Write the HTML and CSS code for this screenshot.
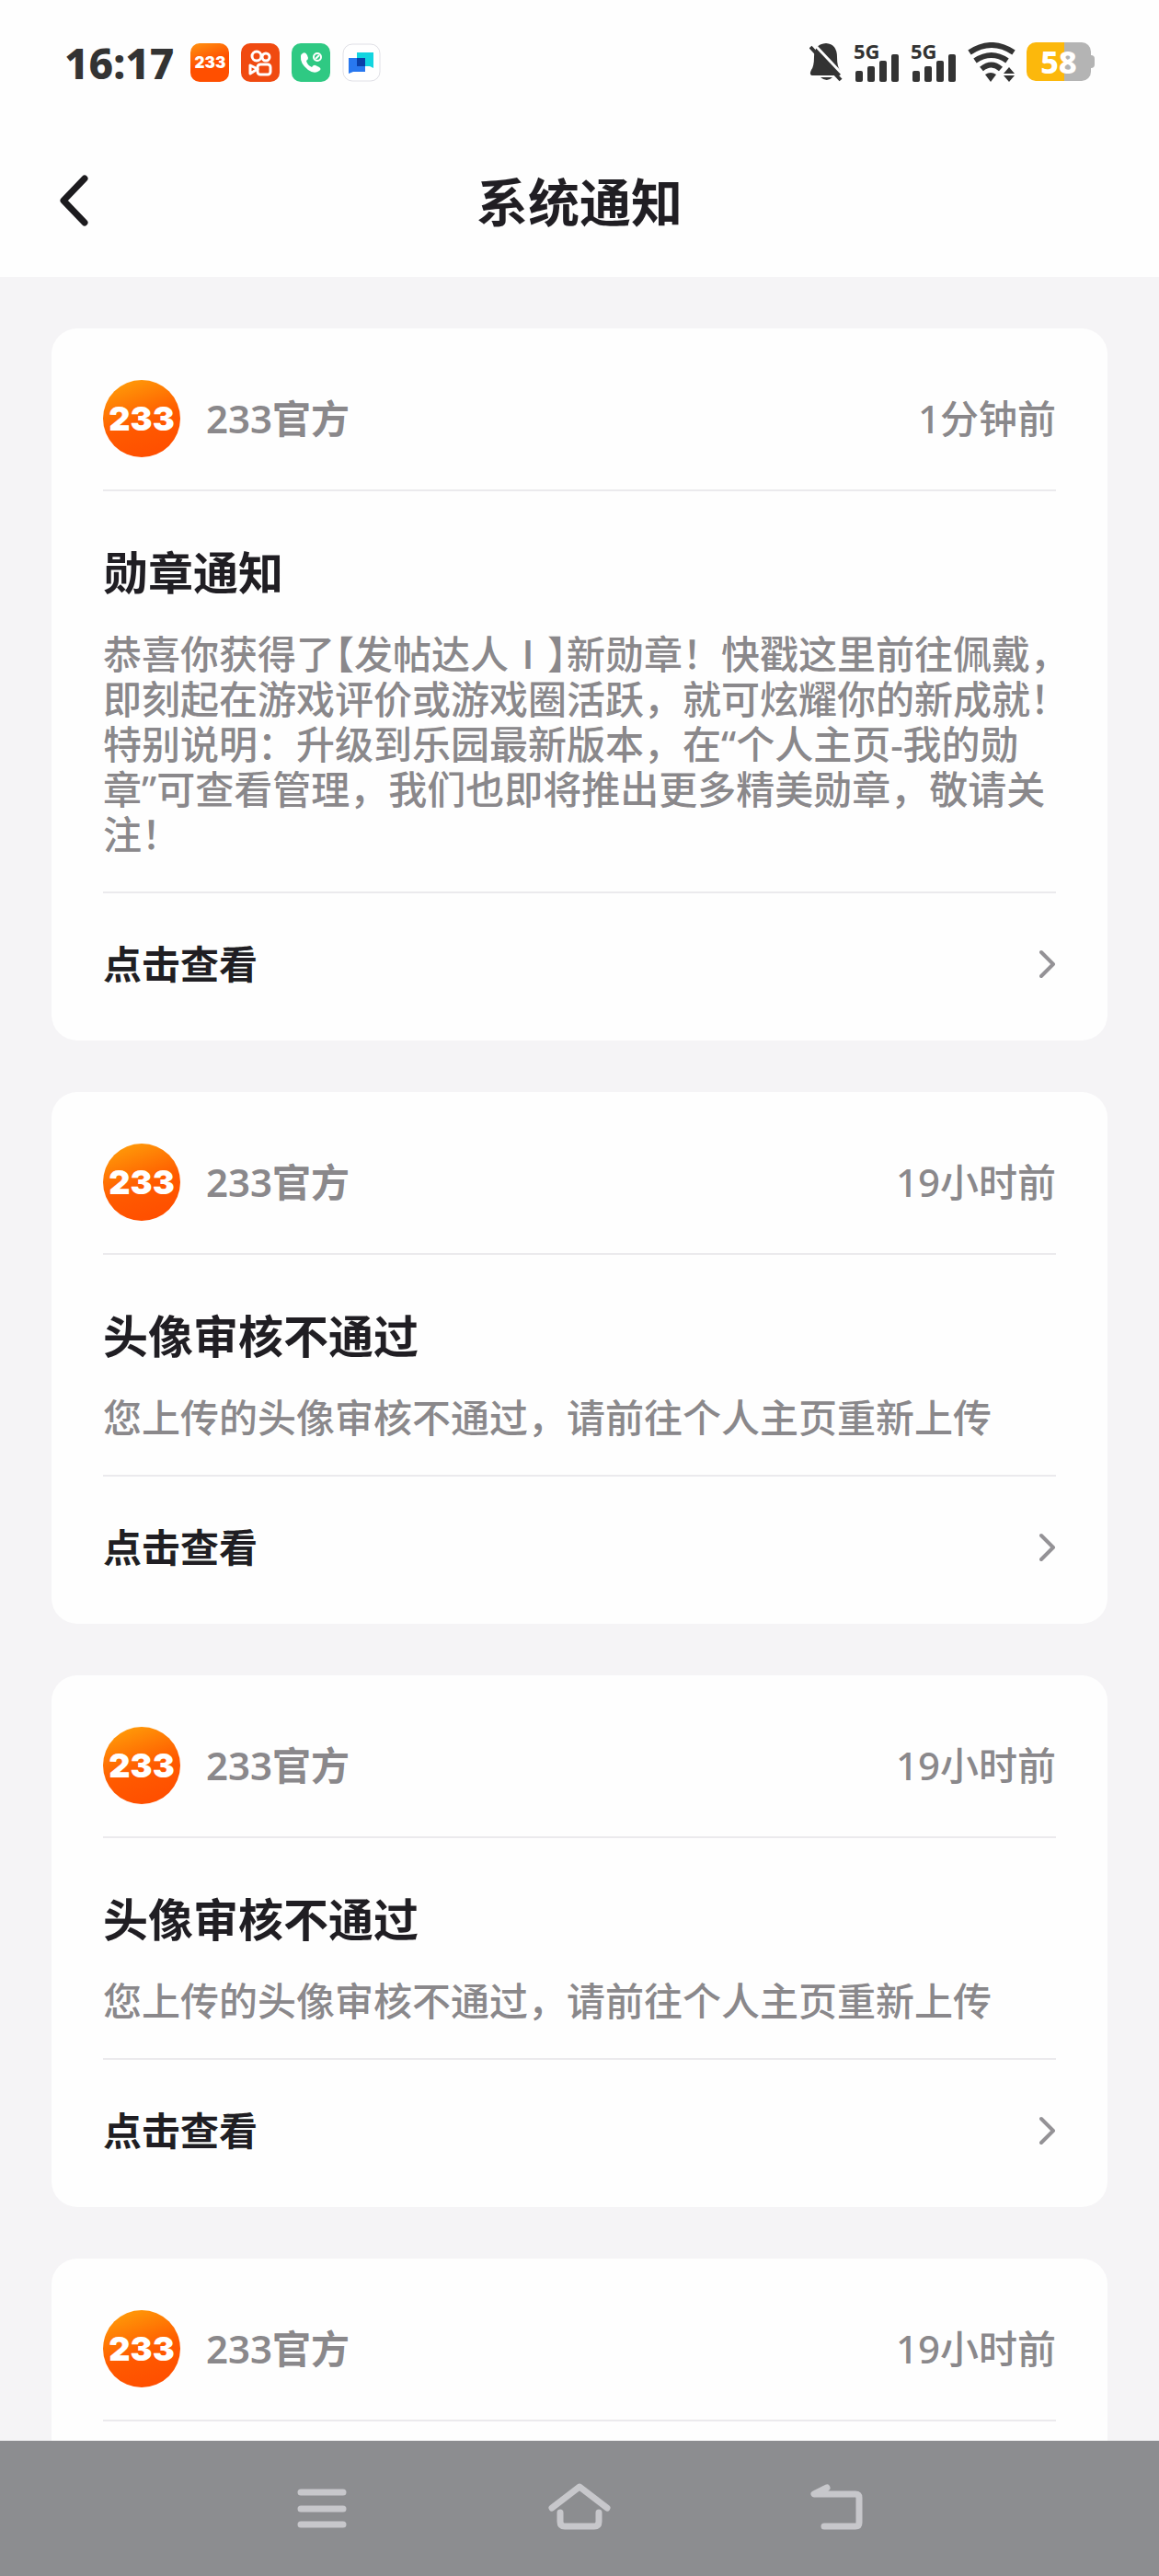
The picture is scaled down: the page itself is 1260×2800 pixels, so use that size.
FILE: index.html
```
<!doctype html>
<html lang="zh-CN">
<head>
    <meta charset="utf-8">
    <title>系统通知</title>
    <meta name="viewport" content="width=device-width, initial-scale=1">
    <link rel="stylesheet" href="styles.css">
</head>

<body>
<div class="statusbar">
    <span class="clock">16:17</span>
    <div class="apps">
        <span class="app app-233">233</span>
        <svg class="app" viewBox="0 0 42 42">
            <rect width="42" height="42" rx="10" fill="#f04a10"/>
            <g fill="none" stroke="#fff" stroke-width="3">
                <circle cx="17" cy="14" r="5"/>
                <circle cx="27" cy="15" r="4"/>
                <rect x="18" y="23" width="14" height="11" rx="3"/>
                <path d="M18 28 L10 24 V33 Z" stroke-linejoin="round"/>
            </g>
        </svg>
        <svg class="app" viewBox="0 0 42 42">
            <rect width="42" height="42" rx="10" fill="#2fc983"/>
            <path d="M12 11 q3 -2 5 2 l1 3 q0 2 -2 3 q1 5 6 7 q2 -3 4 -2 l4 2 q3 2 0 4 q-5 4 -12 -1 q-9 -7 -8 -15 q0 -2 2 -3z" fill="#fff"/>
            <circle cx="28" cy="15" r="4" fill="none" stroke="#fff" stroke-width="2"/>
            <path d="M26 17 L30 13" stroke="#fff" stroke-width="2"/>
        </svg>
        <svg class="app" viewBox="0 0 42 42">
            <rect x="1" y="1" width="40" height="40" rx="10" fill="#fff" stroke="#e0e0e6"/>
            <path d="M16 10 H34 V27 L30 25 H16 Z" fill="#12d5e0"/>
            <path d="M7 16 H25 V31 H12 L7 33 Z" fill="#2878f0"/>
            <rect x="16" y="16" width="9" height="9" fill="#0a3fa8"/>
        </svg>
    </div>
    <div class="signals">
        <svg width="36" height="44" viewBox="0 0 36 44">
            <path d="M18 1 q-13 1 -13 15 q0 10 -3 14 q-3 6 2 6 H31 q5 0 2 -6 q-3 -4 -3 -14 q0 -14 -12 -15z" fill="#333"/>
            <path d="M12 38 H25 q-6 6 -13 0z" fill="#333"/>
            <path d="M5 2 L38 37" stroke="#fefefe" stroke-width="3"/>
            <path d="M1 5 L34 41" stroke="#333" stroke-width="4"/>
        </svg>
        <div class="mobile">
            <span>5G</span>
            <svg width="50" height="44" viewBox="0 0 50 44">
                <g fill="#333">
                    <rect x="2" y="31" width="8" height="12" rx="2"/>
                    <rect x="15" y="26" width="8" height="17" rx="2"/>
                    <rect x="28" y="20" width="8" height="23" rx="2"/>
                    <rect x="41" y="13" width="8" height="30" rx="2"/>
                </g>
            </svg>
        </div>
        <div class="mobile">
            <span>5G</span>
            <svg width="50" height="44" viewBox="0 0 50 44">
                <g fill="#333">
                    <rect x="2" y="31" width="8" height="12" rx="2"/>
                    <rect x="15" y="26" width="8" height="17" rx="2"/>
                    <rect x="28" y="20" width="8" height="23" rx="2"/>
                    <rect x="41" y="13" width="8" height="30" rx="2"/>
                </g>
            </svg>
        </div>
        <svg width="52" height="44" viewBox="0 0 52 44">
            <g fill="none" stroke="#333" stroke-width="6">
                <path d="M2 11 Q26 -5 50 11"/>
                <path d="M8 20 Q26 8 43 20"/>
                <path d="M15 29 Q26 20 36 29"/>
            </g>
            <path d="M19 35 Q25 31 31 35 L25 43 Z" fill="#333"/>
            <path d="M39 34 L45 27 L51 34 Z M39 36 H51 L45 43 Z" fill="#333"/>
        </svg>
        <div class="battery"><span>58</span></div>
    </div>
</div>

<header class="header">
    <button class="back" aria-label="返回">
        <svg width="36" height="60" viewBox="0 0 36 60">
            <path d="M30 5 L7 29 L30 53" fill="none" stroke="#1c1b1e" stroke-width="7" stroke-linecap="round" stroke-linejoin="round"/>
        </svg>
    </button>
    <h1>系统通知</h1>
</header>

<main class="list">
    <article class="card">
        <div class="sender">
            <span class="avatar">233</span>
            <span class="name">233官方</span>
            <time>1分钟前</time>
        </div>
        <div class="content">
            <h2>勋章通知</h2>
            <p>恭喜你获得了<span class="half">【</span>发帖达人Ⅰ<span class="half">】</span>新勋章！快戳这里前往佩戴<span class="half">，</span>即刻起在游戏评价或游戏圈活跃，就可炫耀你的新成就<span class="half">！</span>特别说明：升级到乐园最新版本，在“个人主页-我的勋章”可查看管理，我们也即将推出更多精美勋章，敬请关注！</p>
        </div>
        <a class="more" href="#">点击查看
            <svg width="18" height="32" viewBox="0 0 18 32"><path d="M2 3 L15 16 L2 29"/></svg>
        </a>
    </article>

    <article class="card">
        <div class="sender">
            <span class="avatar">233</span>
            <span class="name">233官方</span>
            <time>19小时前</time>
        </div>
        <div class="content">
            <h2>头像审核不通过</h2>
            <p>您上传的头像审核不通过，请前往个人主页重新上传</p>
        </div>
        <a class="more" href="#">点击查看
            <svg width="18" height="32" viewBox="0 0 18 32"><path d="M2 3 L15 16 L2 29"/></svg>
        </a>
    </article>

    <article class="card">
        <div class="sender">
            <span class="avatar">233</span>
            <span class="name">233官方</span>
            <time>19小时前</time>
        </div>
        <div class="content">
            <h2>头像审核不通过</h2>
            <p>您上传的头像审核不通过，请前往个人主页重新上传</p>
        </div>
        <a class="more" href="#">点击查看
            <svg width="18" height="32" viewBox="0 0 18 32"><path d="M2 3 L15 16 L2 29"/></svg>
        </a>
    </article>

    <article class="card card-cut">
        <div class="sender">
            <span class="avatar">233</span>
            <span class="name">233官方</span>
            <time>19小时前</time>
        </div>
    </article>
</main>

<nav class="navbar">
    <button aria-label="最近任务">
        <svg width="68" height="56" viewBox="0 0 68 56">
            <path d="M11 11 H57 M11 29 H57 M11 46 H57"/>
        </svg>
    </button>
    <button aria-label="主屏幕">
        <svg width="68" height="56" viewBox="0 0 68 56">
            <path d="M4 28 L34 5 L64 28"/>
            <path d="M13 33 V43 Q13 48 18 48 H50 Q55 48 55 43 V33"/>
        </svg>
    </button>
    <button aria-label="返回上一页">
        <svg width="68" height="56" viewBox="0 0 68 56">
            <path d="M23 6 L9 13 H54 Q58 13 58 17 V44 Q58 48 54 48 H20"/>
        </svg>
    </button>
</nav>
</body>
</html>
```
FILE: styles.css
```
* {
    box-sizing: border-box;
}

body {
    margin: 0;
    height: 100vh;
    display: flex;
    flex-direction: column;
    background-color: #f5f4f6;
    color: #201e23;
    font-family: "Noto Sans", "Noto Sans CJK SC", sans-serif;
}

button {
    border: 0;
    padding: 0;
    background: none;
    cursor: pointer;
}

svg {
    display: block;
    flex: none;
}

/* Statusleiste */
.statusbar {
    flex: none;
    display: flex;
    align-items: center;
    height: 136px;
    padding: 0 70px;
    background-color: #fefefe;
    color: #333;
}

.clock {
    font-size: 46px;
    font-weight: 800;
    line-height: 48px;
}

.apps {
    display: flex;
    gap: 13px;
    margin-left: 18px;
}

.app {
    width: 42px;
    height: 42px;
}

.app-233 {
    border-radius: 10px;
    background: linear-gradient(160deg, #ff9412, #ff4f00 50%);
    color: #fff;
    font-family: "Inter", sans-serif;
    font-size: 17px;
    font-weight: 900;
    line-height: 42px;
    text-align: center;
}

.signals {
    display: flex;
    gap: 12px;
    margin-left: auto;
}

.mobile {
    position: relative;
}

.mobile span {
    position: absolute;
    top: 0;
    left: 0;
    font-size: 22px;
    font-weight: bold;
    line-height: 18px;
}

.battery {
    position: relative;
    width: 70px;
    height: 42px;
    margin-right: 4px;
    border-radius: 10px;
    background: linear-gradient(to right, #fcb80c 58%, #b4b4b4 58%);
    color: #fff;
    font-size: 34px;
    font-weight: 800;
    line-height: 42px;
    text-align: center;
}

.battery::after {
    content: "";
    position: absolute;
    top: 14px;
    right: -4px;
    width: 4px;
    height: 14px;
    border-radius: 0 4px 4px 0;
    background-color: #b4b4b4;
}

/* Titelzeile */
.header {
    flex: none;
    display: grid;
    grid-template-columns: 1fr auto 1fr;
    align-items: center;
    height: 165px;
    padding: 0 62px;
    background-color: #fefefe;
}

.back {
    justify-self: start;
}

.header h1 {
    margin: 0;
    font-size: 56px;
    font-weight: bold;
    line-height: 64px;
}

/* Liste der Nachrichten */
.list {
    flex: 1;
    min-height: 0;
    overflow: hidden;
    display: flex;
    flex-direction: column;
    gap: 56px;
    padding: 56px 56px 0;
}

.card {
    flex: none;
    padding: 56px 56px 0;
    border-radius: 28px;
    background-color: #fefefe;
}

/* letzte Karte läuft bis unter die Navigationsleiste */
.card-cut {
    flex: 1 0 auto;
    border-radius: 28px 28px 0 0;
}

.sender {
    display: flex;
    align-items: center;
    gap: 28px;
    padding-bottom: 35px;
    border-bottom: 2px solid #ebeaed;
    color: #8a888b;
    font-size: 42px;
    line-height: 48px;
}

.avatar {
    width: 84px;
    height: 84px;
    border-radius: 50%;
    background: linear-gradient(160deg, #ffa50a, #ff5a00 55%, #ff4b00);
    color: #fff;
    font-family: "Inter", sans-serif;
    font-size: 36px;
    font-weight: 900;
    line-height: 84px;
    text-align: center;
}

.name {
    font-weight: 600;
}

.sender time {
    margin-left: auto;
    font-weight: 500;
}

.content {
    padding: 60px 0 38px;
    border-bottom: 2px solid #ebeaed;
}

.content h2 {
    margin: 0 0 36px;
    font-size: 49px;
    font-weight: bold;
    line-height: 56px;
}

.content p {
    margin: 0;
    color: #8a888b;
    font-size: 42px;
    font-weight: 500;
    line-height: 49px;
}

/* schmale Satzzeichen */
.half {
    font-feature-settings: "halt";
}

.more {
    display: flex;
    align-items: center;
    justify-content: space-between;
    height: 160px;
    padding-bottom: 6px;
    color: #201e23;
    font-size: 42px;
    font-weight: 600;
    line-height: 48px;
    text-decoration: none;
}

.more path {
    fill: none;
    stroke: #949296;
    stroke-width: 4;
    stroke-linecap: round;
    stroke-linejoin: round;
}

/* Navigationsleiste des Systems */
.navbar {
    flex: none;
    display: grid;
    grid-template-columns: repeat(3, 1fr);
    height: 147px;
    padding: 0 calc(100% / 6) 2px;
    background-color: #8c8d90;
}

.navbar button {
    display: flex;
    align-items: center;
    justify-content: center;
}

.navbar path {
    fill: none;
    stroke: #c7c7cb;
    stroke-width: 7;
    stroke-linecap: round;
    stroke-linejoin: round;
}
```
